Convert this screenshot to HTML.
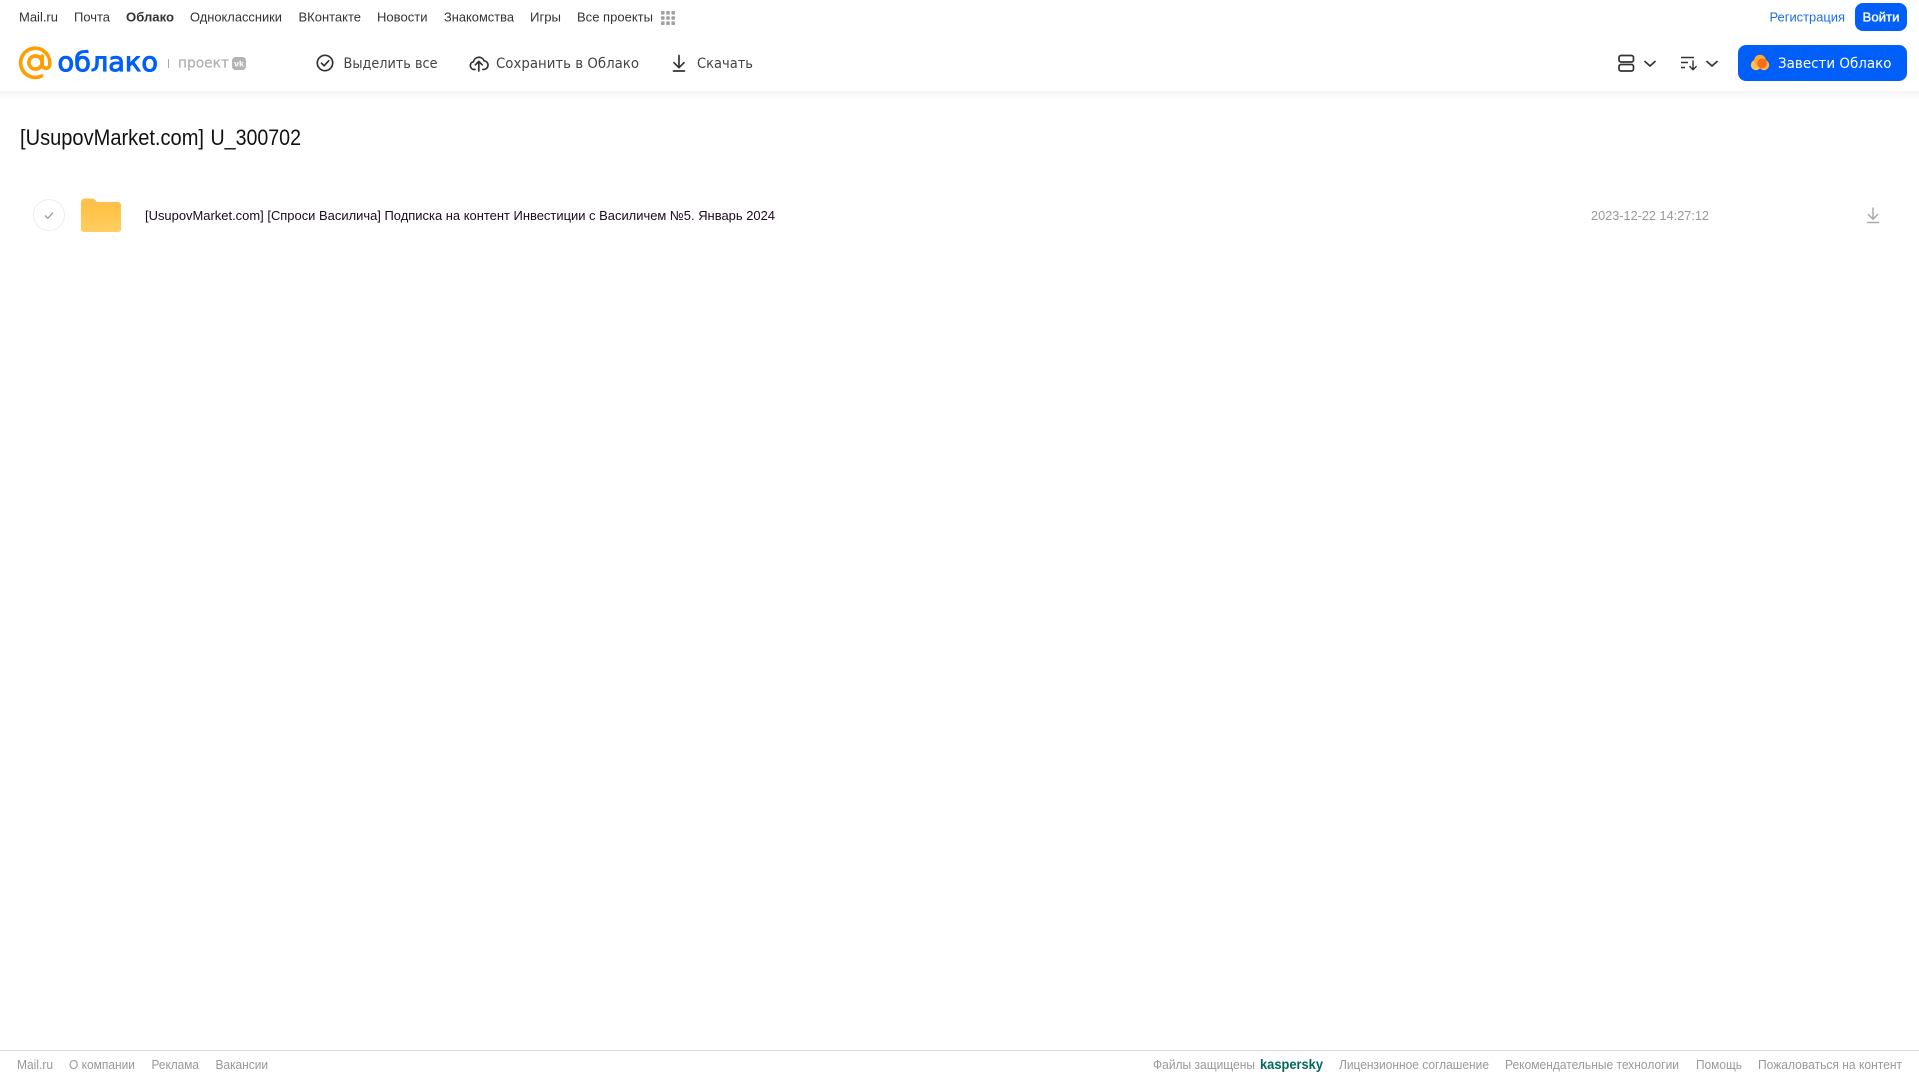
<!DOCTYPE html>
<html lang="ru">
<head>
<meta charset="utf-8">
<title>[UsupovMarket.com] U_300702</title>
<style>
html,body{margin:0;padding:0;background:#fff;width:1919px;height:1079px;overflow:hidden}
#hdr{position:absolute;left:0;top:0;width:1919px;height:91px;background:#fff}
#shadow{position:absolute;left:0;top:91px;width:1919px;height:10px;background:linear-gradient(#f5f5f5,#fff)}
#fl{position:absolute;left:0;top:1050px;width:1919px;height:1px;background:#d8d8d8}
svg{position:absolute;left:0;top:0}
text{font-family:"Liberation Sans",sans-serif;white-space:pre}
.n{font-size:13px;fill:#333}
.t{font-size:14px;fill:#444;font-family:"DejaVu Sans",sans-serif}
.f{font-size:12.5px;fill:#999}
</style>
</head>
<body>
<div id="hdr"></div>
<div id="shadow"></div>
<div id="fl"></div>
<svg width="1919" height="1079" viewBox="0 0 1919 1079" xmlns="http://www.w3.org/2000/svg">
<defs>
<linearGradient id="fg" x1="0" y1="0" x2="0" y2="1"><stop offset="0" stop-color="#ffc144"/><stop offset="1" stop-color="#ffcf63"/></linearGradient>
</defs>
<!-- top nav -->
<g>
<text class="n" x="19" y="21.5" textLength="39" lengthAdjust="spacingAndGlyphs">Mail.ru</text>
<text class="n" x="74" y="21.5" textLength="36" lengthAdjust="spacingAndGlyphs">Почта</text>
<text class="n" x="126" y="21.5" textLength="48" lengthAdjust="spacingAndGlyphs" font-weight="700">Облако</text>
<text class="n" x="190" y="21.5" textLength="92" lengthAdjust="spacingAndGlyphs">Одноклассники</text>
<text class="n" x="298.500" y="21.5" textLength="62.500" lengthAdjust="spacingAndGlyphs">ВКонтакте</text>
<text class="n" x="377" y="21.5" textLength="50.500" lengthAdjust="spacingAndGlyphs">Новости</text>
<text class="n" x="444" y="21.5" textLength="70" lengthAdjust="spacingAndGlyphs">Знакомства</text>
<text class="n" x="530" y="21.5" textLength="31" lengthAdjust="spacingAndGlyphs">Игры</text>
<text class="n" x="577" y="21.5" textLength="76" lengthAdjust="spacingAndGlyphs">Все проекты</text>
<g fill="#a0a0a0">
<rect x="661" y="11" width="3.6" height="3.6" rx=".8"/><rect x="666.2" y="11" width="3.6" height="3.6" rx=".8"/><rect x="671.4" y="11" width="3.6" height="3.6" rx=".8"/>
<rect x="661" y="16.2" width="3.6" height="3.6" rx=".8"/><rect x="666.2" y="16.2" width="3.6" height="3.6" rx=".8"/><rect x="671.4" y="16.2" width="3.6" height="3.6" rx=".8"/>
<rect x="661" y="21.4" width="3.6" height="3.6" rx=".8"/><rect x="666.2" y="21.4" width="3.6" height="3.6" rx=".8"/><rect x="671.4" y="21.4" width="3.6" height="3.6" rx=".8"/>
</g>
<text class="n" x="1769.500" y="21.5" textLength="75.500" lengthAdjust="spacingAndGlyphs" style="fill:#1a6fe8">Регистрация</text>
<rect x="1855" y="3" width="52" height="28" rx="8" fill="#005ff9"/>
<text class="n" x="1862.500" y="21.5" textLength="37" lengthAdjust="spacingAndGlyphs" style="fill:#fff;stroke:#fff;stroke-width:.35">Войти</text>
</g>
<!-- logo -->
<g fill="none" stroke="#ff9e00" stroke-width="3.6" stroke-linecap="round">
<circle cx="35.5" cy="62.5" r="6.6"/>
<path d="M42.2 56v8.5a3.7 3.7 0 0 0 7.6 0v-2A14.6 14.6 0 1 0 41.5 76"/>
</g>
<text x="57.500" y="71" font-size="27" textLength="100.500" lengthAdjust="spacingAndGlyphs" style="font-family:'DejaVu Sans',sans-serif;fill:#005ff9;stroke:#005ff9;stroke-width:1;stroke-linejoin:round">облако</text>
<rect x="168" y="59" width="1" height="9" fill="#aaa"/>
<text x="178" y="67.500" font-size="14" textLength="51" lengthAdjust="spacingAndGlyphs" style="font-family:'DejaVu Sans',sans-serif;fill:#b0b0b0;stroke:#b0b0b0;stroke-width:.25">проект</text>
<rect x="232" y="57" width="14" height="13" rx="3.500" fill="#b4b4b4"/>
<text x="234" y="66.500" font-size="8" font-weight="700" textLength="10" lengthAdjust="spacingAndGlyphs" style="fill:#fff">vk</text>
<!-- toolbar -->
<g fill="none" stroke="#333" stroke-width="1.7" stroke-linecap="round" stroke-linejoin="round">
<circle cx="325" cy="63" r="7.7"/>
<path d="M321.5 63.2l2.6 2.6 4.6-5"/>
<path d="M475 69.500h-1a3.900 3.900 0 0 1-.6-7.700 5.600 5.600 0 0 1 10.700-1 4.300 4.300 0 0 1 .5 8.500l-1.600.2"/>
<path d="M478.800 71V61.500m-3.400 3.300l3.400-3.400 3.400 3.400"/>
<path d="M679 55.500v12m-5-4.800l5 5 5-5"/>
<path d="M673.500 71h11"/>
</g>
<text class="t" x="343.500" y="68" textLength="94" lengthAdjust="spacingAndGlyphs">Выделить все</text>
<text class="t" x="496" y="68" textLength="143" lengthAdjust="spacingAndGlyphs">Сохранить в Облако</text>
<text class="t" x="697" y="68" textLength="56" lengthAdjust="spacingAndGlyphs">Скачать</text>
<!-- right toolbar -->
<g fill="none" stroke="#333" stroke-width="1.7" stroke-linecap="round" stroke-linejoin="round">
<rect x="1619" y="55.500" width="14.500" height="6.500" rx="2"/>
<rect x="1619" y="64.500" width="14.500" height="6.500" rx="2"/>
<path d="M1645 61.500l5 4.500 5-4.500"/>
<path d="M1707 61.500l5 4.500 5-4.500"/>
<path stroke-width="1.400" stroke-linecap="butt" d="M1681 57.500h13M1681 62.500h7M1681 67.500h4"/>
<path stroke-width="1.400" d="M1693 61v8.500m-3.200-3l3.200 3.200 3.200-3.200"/>
</g>
<rect x="1738" y="45" width="169" height="36" rx="8" fill="#005ff9"/>
<g>
<circle cx="1756" cy="65" r="5.200" fill="#ffc34d"/>
<circle cx="1760" cy="60.500" r="5.800" fill="#ffa930"/>
<circle cx="1764" cy="65" r="5.200" fill="#ffb53d"/>
<circle cx="1762" cy="63.500" r="4.800" fill="#f96a1c"/>
</g>
<text class="t" x="1778" y="68" textLength="113.500" lengthAdjust="spacingAndGlyphs" style="fill:#fff">Завести Облако</text>
<!-- title -->
<text x="20" y="145" font-size="22" textLength="184" lengthAdjust="spacingAndGlyphs" style="fill:#111">[UsupovMarket.com]</text>
<text x="210.500" y="145" font-size="22" textLength="90.500" lengthAdjust="spacingAndGlyphs" style="fill:#111">U_300702</text>
<!-- row -->
<circle cx="49" cy="215" r="15.500" fill="#fff" stroke="#eeeeee" stroke-width="1"/>
<path d="M45 215.500l2.800 2.800 5.200-5.600" fill="none" stroke="#999" stroke-width="1.300"/>
<path d="M81 202a3.500 3.500 0 0 1 3.500-3.500h7.500a4 4 0 0 1 3 1.300l2 2.200h21a3 3 0 0 1 3 3V229a3 3 0 0 1-3 3H84a3 3 0 0 1-3-3z" fill="#fdbf4d"/>
<path d="M81 206.500h40v22.500a3 3 0 0 1-3 3H84a3 3 0 0 1-3-3z" fill="url(#fg)"/>
<text x="145" y="220" font-size="13" textLength="630" lengthAdjust="spacingAndGlyphs" style="fill:#1a0a1e">[UsupovMarket.com] [Спроси Василича] Подписка на контент Инвестиции с Василичем №5. Январь 2024</text>
<text x="1591" y="220" font-size="13" textLength="118" lengthAdjust="spacingAndGlyphs" style="fill:#999">2023-12-22 14:27:12</text>
<path d="M1873 207.500v11.500m-5-4.800l5 5 5-5M1867 222.500h12" fill="none" stroke="#aaa" stroke-width="1.500"/>
<!-- footer -->
<text class="f" x="17" y="1069" textLength="36" lengthAdjust="spacingAndGlyphs">Mail.ru</text>
<text class="f" x="69" y="1069" textLength="66" lengthAdjust="spacingAndGlyphs">О компании</text>
<text class="f" x="151.500" y="1069" textLength="47.500" lengthAdjust="spacingAndGlyphs">Реклама</text>
<text class="f" x="215.500" y="1069" textLength="52.500" lengthAdjust="spacingAndGlyphs">Вакансии</text>
<text class="f" x="1153" y="1069" textLength="102" lengthAdjust="spacingAndGlyphs">Файлы защищены</text>
<text x="1260" y="1069" font-size="13.500" font-weight="700" textLength="63" lengthAdjust="spacingAndGlyphs" style="fill:#00695a">kaspersky</text>
<text class="f" x="1339" y="1069" textLength="150" lengthAdjust="spacingAndGlyphs">Лицензионное соглашение</text>
<text class="f" x="1505" y="1069" textLength="174" lengthAdjust="spacingAndGlyphs">Рекомендательные технологии</text>
<text class="f" x="1696" y="1069" textLength="46" lengthAdjust="spacingAndGlyphs">Помощь</text>
<text class="f" x="1758" y="1069" textLength="144" lengthAdjust="spacingAndGlyphs">Пожаловаться на контент</text>
</svg>
</body>
</html>
